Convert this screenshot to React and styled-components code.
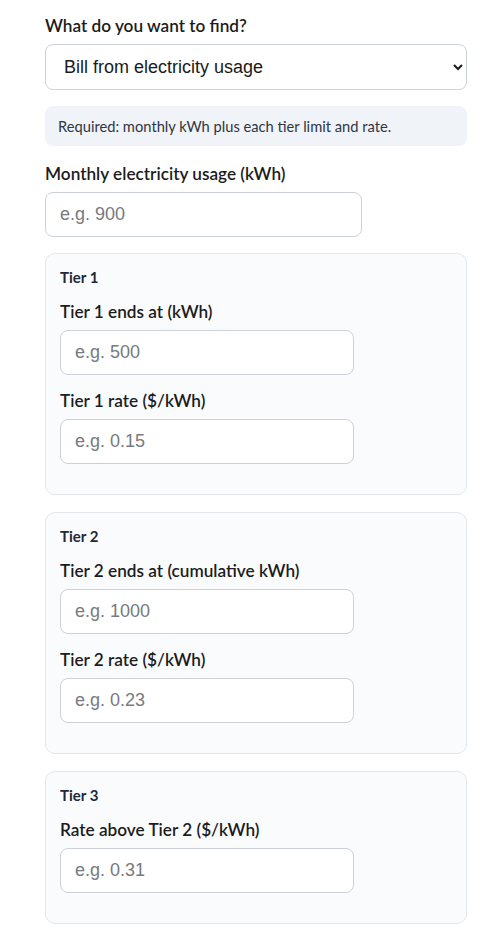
import React from 'react'
import styled, { createGlobalStyle } from 'styled-components'

const GlobalStyle = createGlobalStyle`
  html, body {
    margin: 0;
    padding: 0;
    background: #ffffff;
  }
  body {
    font-family: Lato, "Noto Sans", sans-serif;
    color: #1a1a1a;
  }
`

// styled
const StyledPage = styled.main`
  width: 422px;
  padding: 16px 24px 20px 45px;
`

const StyledField = styled.div`
  display: flex;
  flex-direction: column;
  align-items: flex-start;
  margin-bottom: 16px;
`

const StyledLabel = styled.label`
  font-family: Lato, "Noto Sans", sans-serif;
  font-size: 17.2px;
  font-weight: 600;
  line-height: 20px;
  color: #1c1c1c;
  margin-bottom: 8px;
`

const StyledSelect = styled.select`
  width: 100%;
  height: 46px;
  padding: 0 12px 0 14px;
  border: 1px solid #cdd1d8;
  border-radius: 8px;
  background: #ffffff;
  font-family: "Liberation Sans", Arial, sans-serif;
  font-size: 18px;
  color: #1a1a1a;
`

const StyledInput = styled.input`
  box-sizing: border-box;
  width: 75%;
  height: 45px;
  padding: 0 14px;
  border: 1px solid #cdd1d8;
  border-radius: 8px;
  background: #ffffff;
  font-family: "Liberation Sans", Arial, sans-serif;
  font-size: 18px;
  color: #1a1a1a;
  &::placeholder {
    color: #777a80;
  }
`

const StyledHint = styled.p`
  margin: 0 0 18px;
  padding: 11px 13px;
  border-radius: 8px;
  background: #f0f3f7;
  font-family: Lato, "Noto Sans", sans-serif;
  font-size: 14.7px;
  line-height: 18px;
  color: #2f3642;
`

const StyledTier = styled.fieldset`
  margin: 0 0 17px;
  padding: 14px 14px 14px;
  border: 1px solid #e3e7ee;
  border-radius: 10px;
  background: #fafbfd;
  min-width: 0;
`

const StyledTierTitle = styled.legend`
  float: left;
  width: 100%;
  padding: 0;
  margin-bottom: 16px;
  font-family: Lato, "Noto Sans", sans-serif;
  font-size: 15px;
  font-weight: 700;
  line-height: 18px;
  color: #1f2937;
  & + * {
    clear: both;
  }
`

const tiers = [
  {
    title: 'Tier 1',
    fields: [
      { label: 'Tier 1 ends at (kWh)', placeholder: 'e.g. 500' },
      { label: 'Tier 1 rate ($/kWh)', placeholder: 'e.g. 0.15' },
    ],
  },
  {
    title: 'Tier 2',
    fields: [
      { label: 'Tier 2 ends at (cumulative kWh)', placeholder: 'e.g. 1000' },
      { label: 'Tier 2 rate ($/kWh)', placeholder: 'e.g. 0.23' },
    ],
  },
  {
    title: 'Tier 3',
    fields: [{ label: 'Rate above Tier 2 ($/kWh)', placeholder: 'e.g. 0.31' }],
  },
]

// markup
const App = () => {
  return (
    <>
      <GlobalStyle />
      <StyledPage>
        <StyledField>
          <StyledLabel htmlFor="mode">What do you want to find?</StyledLabel>
          <StyledSelect id="mode" defaultValue="bill">
            <option value="bill">Bill from electricity usage</option>
            <option value="usage">Usage from bill amount</option>
          </StyledSelect>
        </StyledField>

        <StyledHint>Required: monthly kWh plus each tier limit and rate.</StyledHint>

        <StyledField>
          <StyledLabel htmlFor="usage">Monthly electricity usage (kWh)</StyledLabel>
          <StyledInput id="usage" type="text" placeholder="e.g. 900" />
        </StyledField>

        {tiers.map((tier) => (
          <StyledTier key={tier.title}>
            <StyledTierTitle>{tier.title}</StyledTierTitle>
            {tier.fields.map((field) => (
              <StyledField key={field.label}>
                <StyledLabel>{field.label}</StyledLabel>
                <StyledInput type="text" placeholder={field.placeholder} />
              </StyledField>
            ))}
          </StyledTier>
        ))}
      </StyledPage>
    </>
  )
}

export default App
